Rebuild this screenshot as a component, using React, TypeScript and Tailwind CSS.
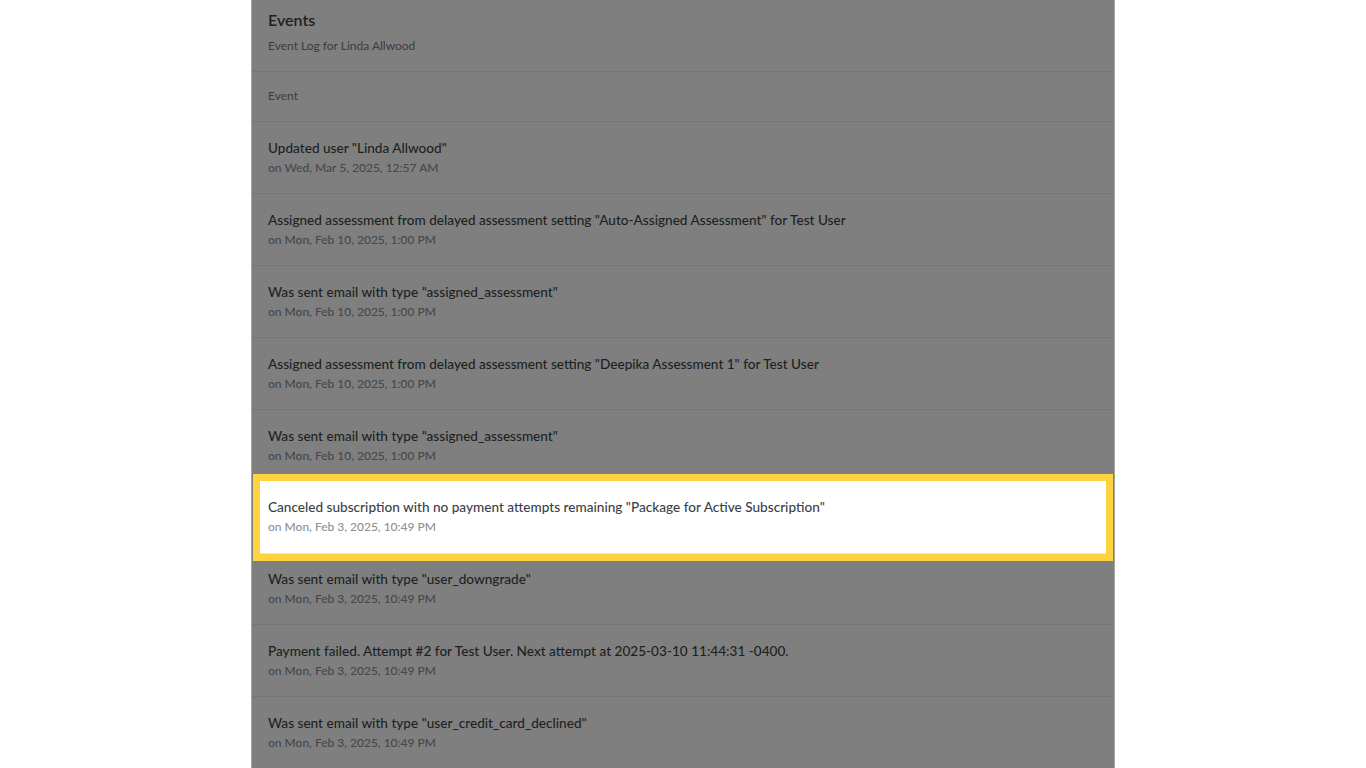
const EVENTS = [
  { text: 'Updated user "Linda Allwood"', date: "on Wed, Mar 5, 2025, 12:57 AM" },
  {
    text: 'Assigned assessment from delayed assessment setting "Auto-Assigned Assessment" for Test User',
    date: "on Mon, Feb 10, 2025, 1:00 PM",
  },
  { text: 'Was sent email with type "assigned_assessment"', date: "on Mon, Feb 10, 2025, 1:00 PM" },
  {
    text: 'Assigned assessment from delayed assessment setting "Deepika Assessment 1" for Test User',
    date: "on Mon, Feb 10, 2025, 1:00 PM",
  },
  { text: 'Was sent email with type "assigned_assessment"', date: "on Mon, Feb 10, 2025, 1:00 PM" },
  {
    text: 'Canceled subscription with no payment attempts remaining "Package for Active Subscription"',
    date: "on Mon, Feb 3, 2025, 10:49 PM",
    active: true,
  },
  { text: 'Was sent email with type "user_downgrade"', date: "on Mon, Feb 3, 2025, 10:49 PM" },
  {
    text: "Payment failed. Attempt #2 for Test User. Next attempt at 2025-03-10 11:44:31 -0400.",
    date: "on Mon, Feb 3, 2025, 10:49 PM",
  },
  { text: 'Was sent email with type "user_credit_card_declined"', date: "on Mon, Feb 3, 2025, 10:49 PM" },
];

export default function App() {
  return (
    <div className="min-h-screen bg-white flex justify-center font-['Lato',sans-serif]">
      <div className="w-[864px] h-[768px] overflow-hidden bg-[#7f7f7f] border-x border-[#a6a6a6]">
        <div className="h-[72px] px-4 pt-[10px] border-b border-[#757575]">
          <h1 className="text-[16px] leading-[20px] font-semibold text-[#1e1f22]">Events</h1>
          <p className="mt-[8px] text-[12px] leading-[16px] text-[#3a3c42]">Event Log for Linda Allwood</p>
        </div>
        <div className="h-[50px] px-4 pb-[2px] flex items-center border-b border-[#757575]">
          <span className="text-[12px] text-[#3a3c42]">Event</span>
        </div>
        {EVENTS.map((e, i) =>
          e.active ? (
            <div key={i} className="h-[72px] px-2 -mt-px">
              <div className="h-[73px] bg-white outline-[7px] outline-solid outline-[#ffd23f] border-b border-[#e5e7eb] pl-2 pt-[16px]">
                <div className="text-[13.6px] leading-[20px] font-medium text-[#3b3f47]">{e.text}</div>
                <div className="mt-[2px] text-[12px] leading-[16px] font-medium text-[#8b909a]">{e.date}</div>
              </div>
            </div>
          ) : (
            <div key={i} className="h-[72px] px-4 pt-[16px] border-b border-[#757575]">
              <div className="text-[13.6px] leading-[20px] font-medium text-[#1e1f22]">{e.text}</div>
              <div className="mt-[2px] text-[12px] leading-[16px] font-medium text-[#45474d]">{e.date}</div>
            </div>
          ),
        )}
      </div>
    </div>
  );
}
